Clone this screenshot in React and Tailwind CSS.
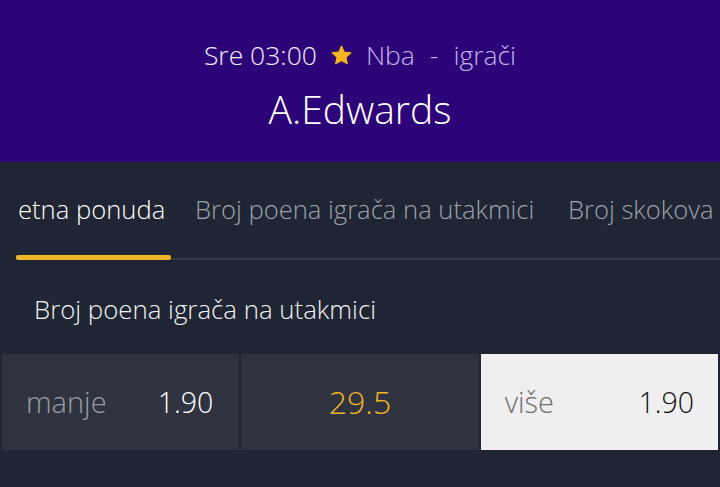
import React from "react";

function Star() {
  return (
    <svg width="23" height="23" viewBox="0 0 24 24" className="mx-[13px]">
      <path
        d="M12 2.2l2.9 6.3 6.9.7-5.2 4.6 1.5 6.8L12 17.1l-6.1 3.5 1.5-6.8-5.2-4.6 6.9-.7z"
        fill="#f6b51e"
        stroke="#f6b51e"
        strokeWidth="1.2"
        strokeLinejoin="round"
      />
    </svg>
  );
}

export default function App() {
  return (
    <div
      className="w-[720px] h-[487px] overflow-hidden bg-[#1f2533] flex flex-col font-light"
      style={{ fontFamily: "'Open Sans', sans-serif" }}
    >
      <div className="h-[162px] bg-[#2c0477] flex flex-col items-center pt-[37px]">
        <div className="flex items-center text-[26.5px] leading-[36px] whitespace-nowrap">
          <span className="text-[#f1ecfb]">Sre 03:00</span>
          <Star />
          <span className="text-[#c5b3ee]">Nba</span>
          <span className="text-[#c5b3ee] ml-[15px]">-</span>
          <span className="text-[#c5b3ee] ml-[15px]">igrači</span>
        </div>
        <div className="mt-[15px] text-[39px] leading-[42px] text-white">A.Edwards</div>
      </div>
      <div className="relative h-[99px] flex flex-col">
        <div className="flex items-center whitespace-nowrap h-[95px] pt-[2px] text-[25.6px]">
          <div className="pl-[18px] text-white w-[195px] shrink-0">etna ponuda</div>
          <div className="text-[#9da2ab] w-[373px] shrink-0">Broj poena igrača na utakmici</div>
          <div className="text-[#9da2ab] shrink-0">Broj skokova</div>
        </div>
        <div className="flex items-end h-[4px] -mt-[1px]">
          <div className="ml-[16px] w-[155px] h-[5px] rounded-[2px] bg-[#f0b429]" />
          <div className="flex-1 h-[2px] bg-[#333a47]" />
        </div>
      </div>
      <div className="pl-[34px] pt-[33px] text-[25.8px] leading-[30px] text-[#f2f3f5]">
        Broj poena igrača na utakmici
      </div>
      <div className="mt-[30px] px-[2px] grid grid-cols-3 gap-[2px] h-[96px] text-[28.5px]">
        <div className="bg-[#2e333f] flex items-center justify-between pl-[24px] pr-[26px]">
          <span className="text-[#9a9ea7] text-[29px]">manje</span>
          <span className="text-white">1.90</span>
        </div>
        <div className="bg-[#2e333f] flex items-center justify-center">
          <span className="text-[#f0b429] text-[32px]">29.5</span>
        </div>
        <div className="bg-[#efefef] flex items-center justify-between pl-[24px] pr-[24px]">
          <span className="text-[#6e6e6e] text-[29px]">više</span>
          <span className="text-[#111]">1.90</span>
        </div>
      </div>
    </div>
  );
}
